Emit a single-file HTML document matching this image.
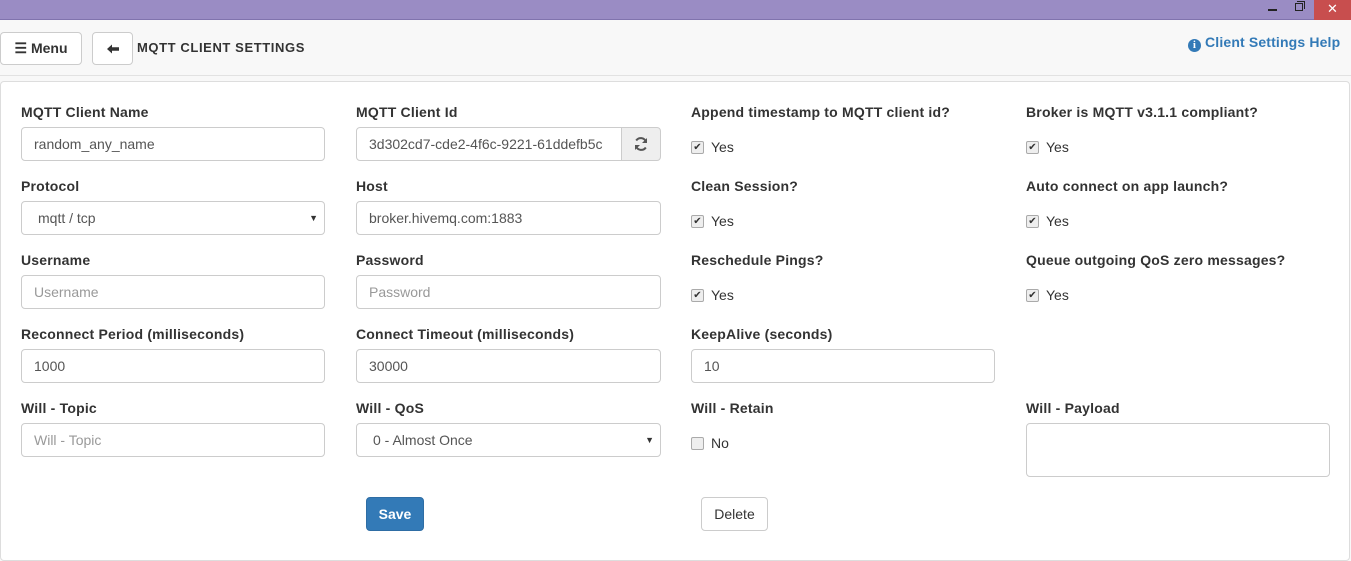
<!DOCTYPE html>
<html><head><meta charset="utf-8"><style>
*{box-sizing:border-box;margin:0;padding:0}
body{width:1351px;height:545px;overflow:hidden;background:#f8f8f8;font-family:"Liberation Sans",Arial,sans-serif;color:#333;position:relative}
.a{position:absolute}
.tb{left:0;top:0;width:1351px;height:20px;background:#9a8cc4;border-bottom:1px solid #8073ad}
.close{left:1314px;top:0;width:37px;height:20px;background:#c84e4e;color:#fff;text-align:center;font-size:13px;line-height:18px}
.btn{background:#fff;border:1px solid #ccc;border-radius:4px;font-size:14px;text-align:center}
.panel{left:0;top:81px;width:1350px;height:480px;background:#fff;border:1px solid #ddd;border-radius:4px}
.lb{font-size:14px;font-weight:bold;line-height:18px;letter-spacing:0.2px}
.in{height:34px;border:1px solid #ccc;border-radius:4px;background:#fff;font-size:14px;padding:0 12px;line-height:32px;color:#555}
.sel{padding-left:16px}
.ph{color:#999}
.cb{width:13px;height:13px;border:1px solid #aaa;border-radius:2px;background:#eee;font-size:10px;line-height:11px;text-align:center;color:#333}
.yes{font-size:14px;color:#333;line-height:16px}
.arr{position:absolute;right:6px;top:0;font-size:9px;color:#333}
</style></head><body>
<div class="a tb"></div>
<div class="a" style="left:1268px;top:9px;width:9px;height:2px;background:#222"></div>
<div class="a" style="left:1295px;top:3px;width:8px;height:8px;border:1px solid #222"></div>
<div class="a" style="left:1297px;top:1px;width:8px;height:8px;border-top:1px solid #222;border-right:1px solid #222"></div>
<div class="a close">✕</div>
<div class="a" style="left:0;top:75px;width:1351px;height:1px;background:#e2e2e2"></div>
<div class="a btn" style="left:0;top:32px;width:82px;height:33px;line-height:31px;font-weight:bold">☰ Menu</div>
<div class="a btn" style="left:92px;top:32px;width:41px;height:33px">
<svg width="14" height="12" viewBox="0 0 14 12" style="margin-top:10px"><path d="M1 6 L6 1.5 L6 4.3 L13 4.3 L13 7.7 L6 7.7 L6 10.5 Z" fill="#333"/></svg></div>
<div class="a" style="left:137px;top:40px;font-size:13px;font-weight:bold;line-height:15px;letter-spacing:0.6px">MQTT CLIENT SETTINGS</div>
<div class="a" style="left:1188px;top:34px;font-size:14px;font-weight:bold;color:#337ab7;line-height:16px;letter-spacing:0.15px"><span style="display:inline-block;width:13px;height:13px;border-radius:50%;background:#337ab7;color:#fff;font-size:11px;line-height:13px;text-align:center;font-family:'Liberation Serif',serif;vertical-align:-1px">i</span> Client Settings Help</div>
<div class="a panel"></div>

<div class="a lb" style="left:21px;top:103px">MQTT Client Name</div>
<div class="a in" style="left:21px;top:127px;width:304px">random_any_name</div>
<div class="a lb" style="left:356px;top:103px">MQTT Client Id</div>
<div class="a in" style="left:356px;top:127px;width:266px;border-radius:4px 0 0 4px;overflow:hidden;white-space:nowrap">3d302cd7-cde2-4f6c-9221-61ddefb5c</div>
<div class="a in" style="left:621px;top:127px;width:40px;border-radius:0 4px 4px 0;background:#eee;padding:0">
<svg width="16" height="16" viewBox="0 0 16 16" style="margin:8px 0 0 11px"><path d="M13 6 A5.5 5.5 0 0 0 3.2 4.5" stroke="#555" stroke-width="2" fill="none"/><path d="M14 2 L14 7 L9 7 Z" fill="#555"/><path d="M3 10 A5.5 5.5 0 0 0 12.8 11.5" stroke="#555" stroke-width="2" fill="none"/><path d="M2 14 L2 9 L7 9 Z" fill="#555"/></svg></div>
<div class="a lb" style="left:691px;top:103px">Append timestamp to MQTT client id?</div>
<div class="a cb" style="left:691px;top:141px">✔</div><div class="a yes" style="left:711px;top:139px">Yes</div>
<div class="a lb" style="left:1026px;top:103px">Broker is MQTT v3.1.1 compliant?</div>
<div class="a cb" style="left:1026px;top:141px">✔</div><div class="a yes" style="left:1046px;top:139px">Yes</div>

<div class="a lb" style="left:21px;top:177px">Protocol</div>
<div class="a in sel" style="left:21px;top:201px;width:304px">mqtt / tcp<span class="arr">▼</span></div>
<div class="a lb" style="left:356px;top:177px">Host</div>
<div class="a in" style="left:356px;top:201px;width:305px">broker.hivemq.com:1883</div>
<div class="a lb" style="left:691px;top:177px">Clean Session?</div>
<div class="a cb" style="left:691px;top:215px">✔</div><div class="a yes" style="left:711px;top:213px">Yes</div>
<div class="a lb" style="left:1026px;top:177px">Auto connect on app launch?</div>
<div class="a cb" style="left:1026px;top:215px">✔</div><div class="a yes" style="left:1046px;top:213px">Yes</div>

<div class="a lb" style="left:21px;top:251px">Username</div>
<div class="a in ph" style="left:21px;top:275px;width:304px">Username</div>
<div class="a lb" style="left:356px;top:251px">Password</div>
<div class="a in ph" style="left:356px;top:275px;width:305px">Password</div>
<div class="a lb" style="left:691px;top:251px">Reschedule Pings?</div>
<div class="a cb" style="left:691px;top:289px">✔</div><div class="a yes" style="left:711px;top:287px">Yes</div>
<div class="a lb" style="left:1026px;top:251px">Queue outgoing QoS zero messages?</div>
<div class="a cb" style="left:1026px;top:289px">✔</div><div class="a yes" style="left:1046px;top:287px">Yes</div>

<div class="a lb" style="left:21px;top:325px">Reconnect Period (milliseconds)</div>
<div class="a in" style="left:21px;top:349px;width:304px">1000</div>
<div class="a lb" style="left:356px;top:325px">Connect Timeout (milliseconds)</div>
<div class="a in" style="left:356px;top:349px;width:305px">30000</div>
<div class="a lb" style="left:691px;top:325px">KeepAlive (seconds)</div>
<div class="a in" style="left:691px;top:349px;width:304px">10</div>

<div class="a lb" style="left:21px;top:399px">Will - Topic</div>
<div class="a in ph" style="left:21px;top:423px;width:304px">Will - Topic</div>
<div class="a lb" style="left:356px;top:399px">Will - QoS</div>
<div class="a in sel" style="left:356px;top:423px;width:305px">0 - Almost Once<span class="arr">▼</span></div>
<div class="a lb" style="left:691px;top:399px">Will - Retain</div>
<div class="a cb" style="left:691px;top:437px"></div><div class="a yes" style="left:711px;top:435px">No</div>
<div class="a lb" style="left:1026px;top:399px">Will - Payload</div>
<div class="a in" style="left:1026px;top:423px;width:304px;height:54px"></div>

<div class="a" style="left:366px;top:497px;width:58px;height:34px;background:#337ab7;border:1px solid #2e6da4;border-radius:4px;color:#fff;font-size:14px;font-weight:bold;text-align:center;line-height:32px">Save</div>
<div class="a btn" style="left:701px;top:497px;width:67px;height:34px;line-height:32px">Delete</div>
</body></html>
